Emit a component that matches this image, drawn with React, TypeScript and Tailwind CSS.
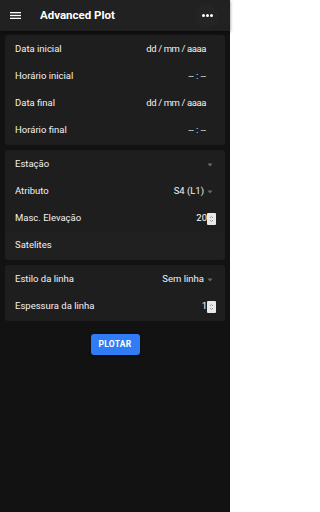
import React from "react";

const Caret = () => (
  <svg width="6" height="4" viewBox="0 0 6 4" className="ml-[3px]">
    <path d="M0.5 0.5 L3 3.5 L5.5 0.5 Z" fill="#6b6b6b" />
  </svg>
);

const Spinner = ({ value }: { value: string }) => (
  <div className="flex items-center">
    <span className="text-white">{value}</span>
    <div className="w-[9px] h-[12px] bg-[#e8e8e8] flex flex-col items-center justify-center rounded-[1px]">
      <svg width="5" height="8" viewBox="0 0 5 8">
        <path d="M1 3 L2.5 1.5 L4 3" stroke="#888" strokeWidth="0.8" fill="none" />
        <path d="M1 5 L2.5 6.5 L4 5" stroke="#888" strokeWidth="0.8" fill="none" />
      </svg>
    </div>
  </div>
);

const Row = ({ label, children, extra = "pr-[19px]" }: { label: string; children?: React.ReactNode; extra?: string }) => (
  <div className={`h-[27px] flex items-center justify-between pl-[10px] ${extra}`}>
    <span className="text-[#f2f2f2]">{label}</span>
    <div className="flex items-center text-[#f2f2f2]">{children}</div>
  </div>
);

export default function App() {
  return (
    <div
      className="w-[230px] h-[512px] bg-[#121212] text-[9.5px] flex flex-col"
      style={{ fontFamily: "Roboto, 'Noto Sans', sans-serif" }}
    >
      <div className="h-[31px] bg-[#212121] flex items-center pl-[10px] pr-[11px] shadow-[0_1px_3px_rgba(0,0,0,0.5)]">
        <svg width="11" height="7" viewBox="0 0 11 7">
          <rect x="0" y="0" width="11" height="1.3" fill="#fff" />
          <rect x="0" y="2.85" width="11" height="1.3" fill="#fff" />
          <rect x="0" y="5.7" width="11" height="1.3" fill="#fff" />
        </svg>
        <span className="ml-[19px] text-white font-bold text-[11.5px]">Advanced Plot</span>
        <div className="ml-auto w-[24px] h-[24px] rounded-full bg-[#242424] flex items-center justify-center gap-[1px]">
          <span className="w-[3px] h-[3px] rounded-full bg-white" />
          <span className="w-[3px] h-[3px] rounded-full bg-white" />
          <span className="w-[3px] h-[3px] rounded-full bg-white" />
        </div>
      </div>

      <div className="px-[5px] pt-[4px] flex flex-col gap-[5px]">
        <div className="bg-[#1e1e1e] rounded-[3px] py-[1px]">
          <Row label="Data inicial"><span className="tracking-[-0.4px]">dd / mm / aaaa</span></Row>
          <Row label="Horário inicial"><span>-- : --</span></Row>
          <Row label="Data final"><span className="tracking-[-0.4px]">dd / mm / aaaa</span></Row>
          <Row label="Horário final"><span>-- : --</span></Row>
        </div>

        <div className="bg-[#1e1e1e] rounded-[3px] py-[1px]">
          <Row label="Estação" extra="pr-[12px]"><Caret /></Row>
          <Row label="Atributo" extra="pr-[12px]"><span>S4 (L1)</span><Caret /></Row>
          <Row label="Masc. Elevação" extra="pr-[9px]"><Spinner value="20" /></Row>
          <Row label="Satelites" extra="bg-[#202020]" />
        </div>

        <div className="bg-[#1e1e1e] rounded-[3px] py-[1px]">
          <Row label="Estilo da linha" extra="pr-[12px]"><span>Sem linha</span><Caret /></Row>
          <Row label="Espessura da linha" extra="pr-[9px]"><Spinner value="1" /></Row>
        </div>
      </div>

      <div className="flex justify-center mt-[13px]">
        <button className="w-[49px] h-[21px] bg-[#2f7cf6] rounded-[3px] text-white font-bold text-[8.5px] tracking-[0.3px] shadow-[0_1px_3px_rgba(0,0,0,0.6)]">
          PLOTAR
        </button>
      </div>
    </div>
  );
}
